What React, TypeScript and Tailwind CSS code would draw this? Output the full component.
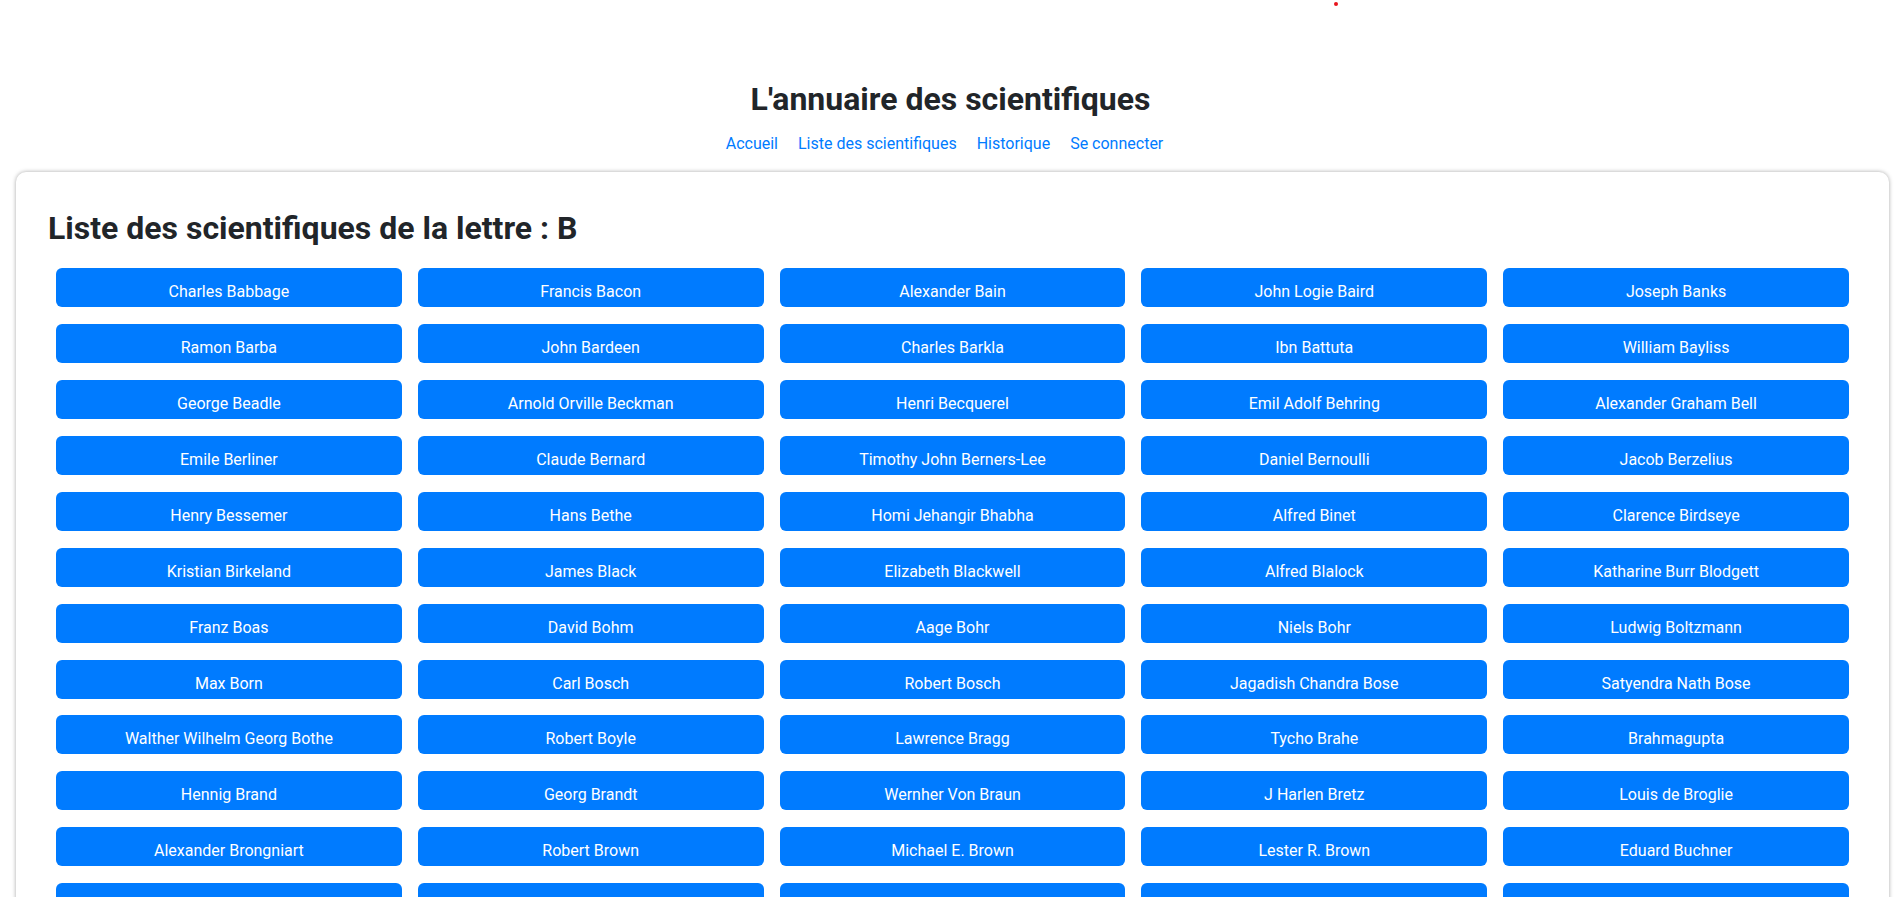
import React from 'react';

const scientists: string[] = [
  'Charles Babbage', 'Francis Bacon', 'Alexander Bain', 'John Logie Baird', 'Joseph Banks',
  'Ramon Barba', 'John Bardeen', 'Charles Barkla', 'Ibn Battuta', 'William Bayliss',
  'George Beadle', 'Arnold Orville Beckman', 'Henri Becquerel', 'Emil Adolf Behring', 'Alexander Graham Bell',
  'Emile Berliner', 'Claude Bernard', 'Timothy John Berners-Lee', 'Daniel Bernoulli', 'Jacob Berzelius',
  'Henry Bessemer', 'Hans Bethe', 'Homi Jehangir Bhabha', 'Alfred Binet', 'Clarence Birdseye',
  'Kristian Birkeland', 'James Black', 'Elizabeth Blackwell', 'Alfred Blalock', 'Katharine Burr Blodgett',
  'Franz Boas', 'David Bohm', 'Aage Bohr', 'Niels Bohr', 'Ludwig Boltzmann',
  'Max Born', 'Carl Bosch', 'Robert Bosch', 'Jagadish Chandra Bose', 'Satyendra Nath Bose',
  'Walther Wilhelm Georg Bothe', 'Robert Boyle', 'Lawrence Bragg', 'Tycho Brahe', 'Brahmagupta',
  'Hennig Brand', 'Georg Brandt', 'Wernher Von Braun', 'J Harlen Bretz', 'Louis de Broglie',
  'Alexander Brongniart', 'Robert Brown', 'Michael E. Brown', 'Lester R. Brown', 'Eduard Buchner',
  'Linda Buck', 'William Buckland', 'Georges-Louis Leclerc', 'Robert Bunsen', 'Luther Burbank',
];

const links = ['Accueil', 'Liste des scientifiques', 'Historique', 'Se connecter'];

export default function App() {
  return (
    <div className="min-h-screen bg-white font-['Roboto',sans-serif] text-[#212529]">
      {/* top strip with the little red marker */}
      <div className="relative h-[80px]">
        <span className="absolute left-[1334px] top-[2px] block h-[4px] w-[4px] rounded-full bg-[#e8141c]"></span>
      </div>

      <header className="text-center">
        <h1 className="text-[32px] font-bold leading-[1.2]">L'annuaire des scientifiques</h1>
        <nav className="mt-[13.6px] flex justify-center gap-[20px] pr-3 text-[16px] leading-6 text-[#007bff]">
          {links.map(l => (
            <a key={l} href="#" className="hover:underline">{l}</a>
          ))}
        </nav>
      </header>

      <main className="ml-4 mr-3 mt-4 rounded-[10px] bg-white px-8 pb-8 pt-[37px] shadow-[0_0_4px_rgba(0,0,0,0.35)]">
        <h2 className="text-[32px] font-bold leading-[1.2]">Liste des scientifiques de la lettre : B</h2>

        <div className="mt-[20.6px] grid grid-cols-5 gap-x-4 gap-y-[16.95px] px-2">
          {scientists.map(name => (
            <button
              key={name}
              className="flex h-[39px] items-center justify-center rounded-[6px] bg-[#007bff] pt-[9px] text-[16px] text-white"
            >
              {name}
            </button>
          ))}
        </div>
      </main>
    </div>
  );
}
